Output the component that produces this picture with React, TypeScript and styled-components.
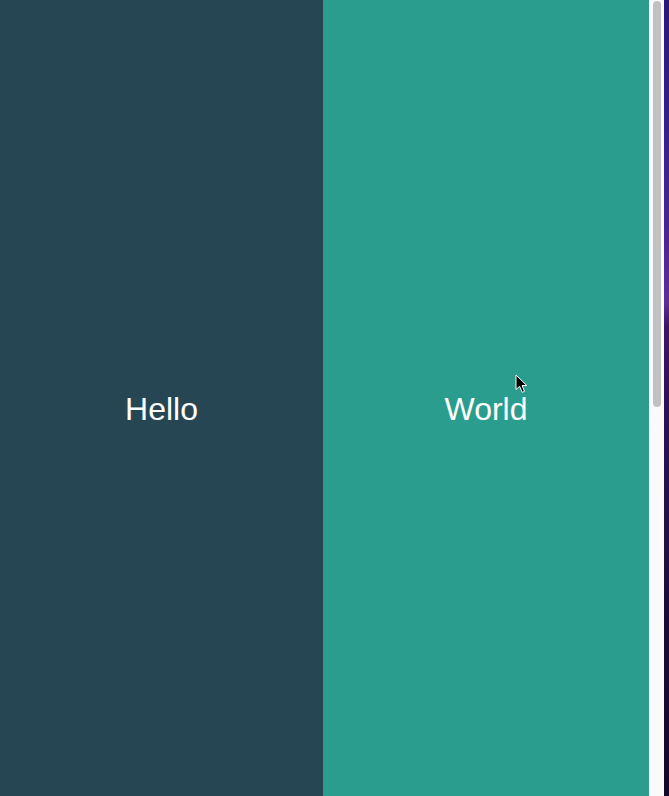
import React from 'react'
import styled, { createGlobalStyle } from 'styled-components'

const GlobalStyle = createGlobalStyle`
  html, body {
    margin: 0;
    padding: 0;
    overflow: hidden;
    background: #fafafa;
  }
  body {
    font-family: 'Liberation Sans', Arial, Helvetica, sans-serif;
  }
`

const panels = [
  { id: 'hello', text: 'Hello', color: '#264653', width: 323 },
  { id: 'world', text: 'World', color: '#2a9d8f', width: 326 },
]

export default function App() {
  return (
    <>
      <GlobalStyle />
      <Screen>
        <Split>
          {panels.map((p) => (
            <Panel key={p.id} $bg={p.color} $width={p.width}>
              <Label>{p.text}</Label>
            </Panel>
          ))}
        </Split>
        <ScrollTrack>
          <ScrollThumb />
        </ScrollTrack>
        <Desktop />
        <Cursor width="13" height="20" viewBox="0 0 13 20" aria-hidden>
          <path
            d="M1 1 L1 15.5 L4.6 12.3 L7.2 18.3 L9.5 17.3 L7 11.5 L11.8 11.5 Z"
            fill="#000"
            stroke="#fff"
            strokeWidth="1"
            strokeLinejoin="round"
          />
        </Cursor>
      </Screen>
    </>
  )
}

const Screen = styled.div`
  position: relative;
  display: flex;
  width: 669px;
  height: 796px;
  overflow: hidden;
`

const Split = styled.main`
  display: flex;
  flex: none;
`

const Panel = styled.section<{ $bg: string; $width: number }>`
  display: flex;
  align-items: center;
  justify-content: center;
  width: ${(p) => p.$width}px;
  height: 796px;
  padding-top: 22px;
  box-sizing: border-box;
  background: ${(p) => p.$bg};
`

const Label = styled.h1`
  margin: 0;
  color: #ffffff;
  font-size: 32px;
  font-weight: 400;
  line-height: 1.15;
`

const ScrollTrack = styled.div`
  flex: none;
  width: 15px;
  height: 796px;
  box-sizing: border-box;
  padding: 1px 3px 0 3px;
  background: #fafafa;
  border-left: 1px solid #ffffff;
`

const ScrollThumb = styled.div`
  width: 8px;
  height: 406px;
  border-radius: 4px;
  background: #c1c1c1;
`

const Desktop = styled.div`
  flex: none;
  width: 5px;
  height: 796px;
  background: linear-gradient(
    to bottom,
    #2a1878 0%,
    #34208a 15%,
    #4a2692 30%,
    #5a3098 38%,
    #3a1662 41%,
    #2c1156 52%,
    #241048 65%,
    #190a34 80%,
    #140828 100%
  );
`

const Cursor = styled.svg`
  position: absolute;
  left: 515px;
  top: 374px;
`
